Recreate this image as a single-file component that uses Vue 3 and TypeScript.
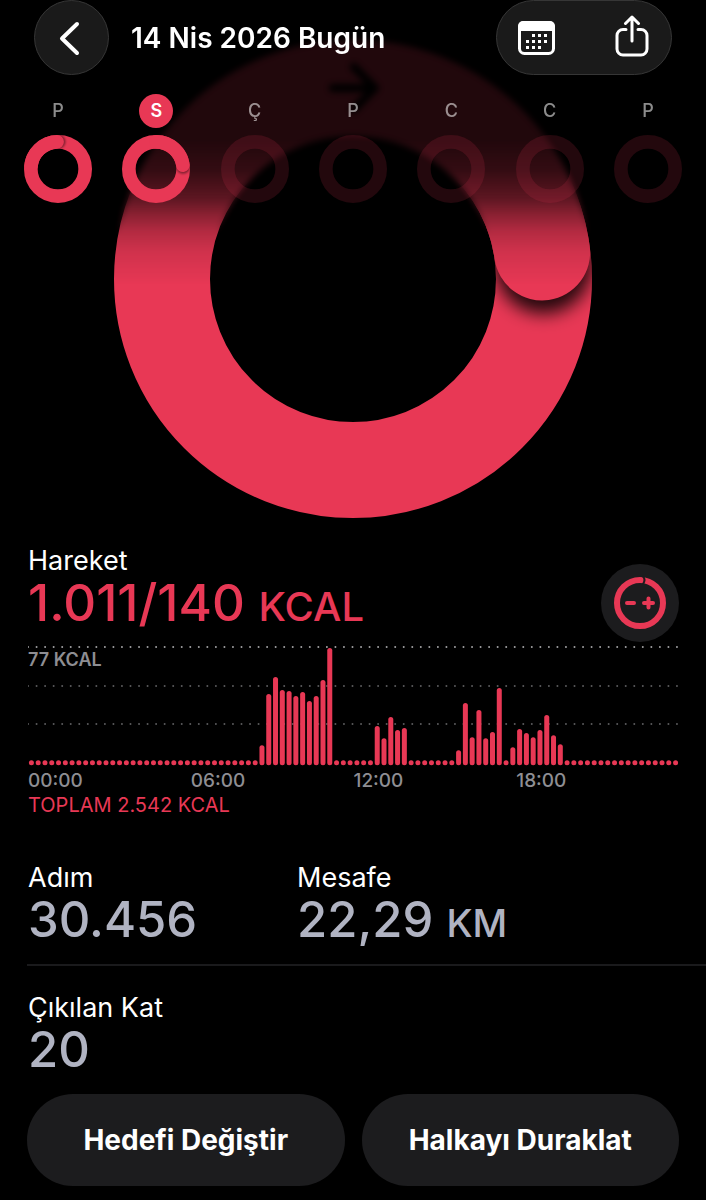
<script setup lang="ts">
interface Day {
  letter: string
  name: string
  angle: number | null
  selected?: boolean
}

const CENTER = 239
const RADIUS = 191

const days: Day[] = [
  { letter: 'P', name: 'Pazartesi', angle: -2 },
  { letter: 'S', name: 'Salı', angle: 82, selected: true },
  { letter: 'Ç', name: 'Çarşamba', angle: null },
  { letter: 'P', name: 'Perşembe', angle: null },
  { letter: 'C', name: 'Cuma', angle: null },
  { letter: 'C', name: 'Cumartesi', angle: null },
  { letter: 'P', name: 'Pazar', angle: null },
]

function pointAt(angle: number) {
  const rad = (angle * Math.PI) / 180
  return {
    x: CENTER + RADIUS * Math.sin(rad),
    y: CENTER - RADIUS * Math.cos(rad),
  }
}

/* Last quarter lap leading up to the rounded tip. */
function tail(angle: number) {
  const from = pointAt(angle - 82)
  const to = pointAt(angle)
  return `M${from.x} ${from.y}A${RADIUS} ${RADIUS} 0 0 1 ${to.x} ${to.y}`
}

const CHART_WIDTH = 650
const BASELINE = 119
const SLOTS = 96
const DOT = 5
const activity: Record<number, number[]> = {
  34: [20, 71, 88, 75, 74, 69, 73, 64, 69, 85, 117],
  51: [39, 27, 48, 35, 37],
  63: [15, 62, 28, 55, 27, 33, 77],
  71: [18, 36, 32, 28, 35, 50, 30, 21],
}
const heights: number[] = Array(SLOTS).fill(DOT)
for (const [start, values] of Object.entries(activity)) {
  values.forEach((value, i) => (heights[Number(start) + i] = value))
}
const slot = CHART_WIDTH / SLOTS
const bars = heights.map((height, i) => ({
  x: (i + 0.5) * slot - DOT / 2,
  y: BASELINE - height,
  height,
}))
const gridLines = [1, 40, 78]
const dotGap = 648 / 76
const hours = ['00:00', '06:00', '12:00', '18:00']
</script>

<template>
  <main class="page">
    <section class="hero">
      <svg class="big-ring" viewBox="0 0 478 478" role="img" aria-label="Hareket halkası">
        <defs>
          <clipPath id="ring-clip">
            <path clip-rule="evenodd" d="M239 0a239 239 0 0 1 0 478a239 239 0 0 1 0-478zM239 96a143 143 0 0 0 0 286a143 143 0 0 0 0-286z" />
          </clipPath>
          <filter id="tip-shadow" x="-50%" y="-50%" width="200%" height="200%">
            <feGaussianBlur stdDeviation="9" />
          </filter>
        </defs>
        <circle class="band" cx="239" cy="239" r="191" />
        <g clip-path="url(#ring-clip)">
          <circle class="shadow" :cx="pointAt(86).x" :cy="pointAt(86).y" r="48" filter="url(#tip-shadow)" />
        </g>
        <path class="band tip" :d="tail(82)" />
        <path class="ring-arrow" d="M219 48h39M240 27l21 21l-21 21" />
      </svg>
      <div class="haze"></div>
      <div class="shade"></div>

      <div class="top">
        <header class="bar">
          <button class="glass back" type="button" aria-label="Geri">
            <svg viewBox="0 0 24 36" width="24" height="36">
              <path d="M19 4L4 18.500L19 33" fill="none" stroke="#fff" stroke-width="4" stroke-linecap="round" stroke-linejoin="round" />
            </svg>
          </button>
          <h1 class="title">14 Nis 2026 Bugün</h1>
          <div class="glass actions">
            <button class="icon-button" type="button" aria-label="Takvim">
              <svg viewBox="0 0 38 42" width="38" height="42">
                <rect x="2.500" y="5.500" width="34" height="31" rx="5" fill="none" stroke="#fff" stroke-width="3" />
                <path d="M1 14V9a5 5 0 0 1 5-5h27a5 5 0 0 1 5 5v5z" fill="#fff" />
                <g fill="#fff">
                  <rect x="15" y="17" width="3" height="3" /><rect x="21" y="17" width="3" height="3" /><rect x="27" y="17" width="3" height="3" />
                  <rect x="9" y="23" width="3" height="3" /><rect x="15" y="23" width="3" height="3" /><rect x="21" y="23" width="3" height="3" /><rect x="27" y="23" width="3" height="3" />
                  <rect x="9" y="29" width="3" height="3" /><rect x="15" y="29" width="3" height="3" /><rect x="21" y="29" width="3" height="3" />
                </g>
              </svg>
            </button>
            <button class="icon-button" type="button" aria-label="Paylaş">
              <svg viewBox="0 0 38 46" width="38" height="46">
                <g fill="none" stroke="#fff" stroke-width="3" stroke-linecap="round" stroke-linejoin="round">
                  <path d="M13 14.500H10a6 6 0 0 0-6 6V34a6 6 0 0 0 6 6h18a6 6 0 0 0 6-6V20.500a6 6 0 0 0-6-6h-3" />
                  <path d="M19 26V2M12.500 8.500L19 2l6.500 6.500" />
                </g>
              </svg>
            </button>
          </div>
        </header>

        <nav class="week" aria-label="Hafta">
          <button v-for="day in days" :key="day.name" class="day" type="button" :aria-label="day.name">
            <span class="letter" :class="{ selected: day.selected }">{{ day.letter }}</span>
            <svg class="day-ring" viewBox="0 0 478 478">
              <circle class="band" :class="{ empty: day.angle === null }" cx="239" cy="239" r="191" />
              <template v-if="day.angle !== null">
                <g clip-path="url(#ring-clip)">
                  <circle class="shadow soft" :cx="pointAt(day.angle + 3).x" :cy="pointAt(day.angle + 3).y" r="50" filter="url(#tip-shadow)" />
                </g>
                <path class="band tip" :d="tail(day.angle)" />
              </template>
            </svg>
          </button>
        </nav>
      </div>
    </section>

    <section class="move">
      <div class="move-head">
        <div>
          <h2 class="label">Hareket</h2>
          <p class="value red">1.011/140 <span class="unit">KCAL</span></p>
        </div>
        <button class="adjust" type="button" aria-label="Hedefi ayarla">
          <svg viewBox="0 0 56 56" width="56" height="56">
            <g fill="none" stroke="#e83855" stroke-linecap="round">
              <circle cx="28" cy="28" r="23" stroke-width="6" />
              <path d="M31 1.500q3 3 0 7.500" stroke="#1c1c1e" stroke-width="2" />
              <path d="M15 28h7M32 28h9M36.500 23.500v9" stroke-width="4" />
            </g>
          </svg>
        </button>
      </div>

      <div class="chart">
        <svg class="plot" viewBox="0 0 650 120" role="img" aria-label="Saatlere göre hareket">
          <line
            v-for="(y, i) in gridLines"
            :key="y"
            class="grid"
            :class="{ strong: i === 0 }"
            x1="0"
            :y1="y"
            x2="650"
            :y2="y"
            :stroke-dasharray="`0 ${dotGap}`"
          />
          <rect v-for="(bar, i) in bars" :key="i" :x="bar.x" :y="bar.y" :width="DOT" :height="bar.height" rx="2.500" fill="#e83855" />
        </svg>
        <span class="peak">77 KCAL</span>
      </div>
      <div class="hours">
        <span v-for="hour in hours" :key="hour">{{ hour }}</span>
      </div>
      <p class="total">TOPLAM 2.542 KCAL</p>
    </section>

    <section class="stats">
      <div>
        <h2 class="label">Adım</h2>
        <p class="value">30.456</p>
      </div>
      <div>
        <h2 class="label">Mesafe</h2>
        <p class="value">22,29 <span class="unit">KM</span></p>
      </div>
    </section>
    <hr class="divider" />
    <section class="stats floors">
      <div>
        <h2 class="label">Çıkılan Kat</h2>
        <p class="value">20</p>
      </div>
    </section>

    <footer class="buttons">
      <button class="pill" type="button">Hedefi Değiştir</button>
      <button class="pill" type="button">Halkayı Duraklat</button>
    </footer>
  </main>
</template>

<style>
body {
  background: #000;
}
</style>

<style scoped>
.page {
  min-height: 100vh;
  box-sizing: border-box;
  overflow: hidden;
  padding-bottom: 13px;
  background: #000;
  color: #fff;
  font-family: Inter, 'Liberation Sans', sans-serif;
}

h1,
h2,
p {
  margin: 0;
  font-weight: 400;
}

button {
  border: 0;
  padding: 0;
  background: none;
  color: inherit;
  font: inherit;
  cursor: pointer;
}

svg {
  display: block;
}

.hero {
  position: relative;
  display: flex;
  justify-content: center;
  padding: 40px 0 27px;
}

.big-ring {
  width: 478px;
  height: 478px;
}

.band {
  fill: none;
  stroke: #e83855;
  stroke-width: 96;
}

.band.empty {
  stroke: rgba(232, 56, 85, 0.15);
}

.tip {
  stroke-linecap: round;
}

.shadow {
  fill: rgba(0, 0, 0, 0.85);
}

.shadow.soft {
  fill: rgba(0, 0, 0, 0.45);
}

.ring-arrow {
  fill: none;
  stroke: #000;
  stroke-width: 8;
  stroke-linecap: round;
  stroke-linejoin: round;
}

.haze,
.shade {
  position: absolute;
  inset: 0 0 auto;
  height: 290px;
}

.haze {
  backdrop-filter: blur(3px);
  mask-image: linear-gradient(#000 180px, transparent 235px);
}

.shade {
  background: linear-gradient(
    rgba(0, 0, 0, 0.86) 140px,
    rgba(0, 0, 0, 0.78) 170px,
    rgba(0, 0, 0, 0.6) 198px,
    rgba(0, 0, 0, 0.4) 215px,
    rgba(0, 0, 0, 0.23) 231px,
    rgba(0, 0, 0, 0.1) 252px,
    transparent 285px
  );
}

.top {
  position: absolute;
  inset: 0 0 auto;
}

.bar {
  display: flex;
  align-items: center;
  height: 75px;
  padding: 0 34px;
}

.glass {
  box-sizing: border-box;
  height: 75px;
  border: 1px solid #363636;
  border-radius: 38px;
  background: #1a1a1a;
}

.back {
  display: flex;
  align-items: center;
  justify-content: center;
  width: 75px;
  padding-right: 4px;
}

.title {
  flex: 1;
  margin-left: 22px;
  font-size: 28px;
  font-weight: 600;
  line-height: 36px;
  white-space: nowrap;
}

.actions {
  display: flex;
  align-items: center;
  justify-content: space-between;
  width: 176px;
  padding: 0 20px;
}

.icon-button {
  display: block;
}

.week {
  display: flex;
  justify-content: space-between;
  padding: 19px 24px 0;
}

.day {
  display: flex;
  flex-direction: column;
  align-items: center;
  gap: 7px;
}

.letter {
  width: 34px;
  border-radius: 17px;
  color: rgba(255, 255, 255, 0.55);
  font-size: 18px;
  font-weight: 500;
  line-height: 34px;
  text-align: center;
}

.letter.selected {
  background: #e83855;
  color: #fff;
  font-weight: 600;
}

.day-ring {
  width: 68px;
  height: 68px;
}

.move {
  padding: 0 27px 0 28px;
}

.move-head {
  display: flex;
  justify-content: space-between;
}

.label {
  font-size: 27px;
  line-height: 32px;
}

.value {
  color: #b0b3c2;
  font-size: 49px;
  font-weight: 500;
  line-height: 52px;
  white-space: nowrap;
}

.unit {
  font-size: 38px;
  line-height: 1;
}

.value.red {
  color: #e83855;
  font-size: 51px;
}

.red .unit {
  font-size: 40px;
}

.adjust {
  display: flex;
  align-items: center;
  justify-content: center;
  width: 78px;
  height: 78px;
  margin-top: 19px;
  border-radius: 50%;
  background: #1c1c1e;
}

.chart {
  position: relative;
  margin-top: 4px;
}

.plot {
  width: 100%;
}

.grid {
  stroke: #5a5a5c;
  stroke-width: 2;
  stroke-linecap: round;
}

.grid.strong {
  stroke: #a0a0a2;
}

.peak {
  position: absolute;
  top: 2px;
  left: 0;
  color: #8e8e93;
  font-size: 18px;
  font-weight: 600;
  line-height: 24px;
}

.hours {
  display: grid;
  grid-template-columns: repeat(4, 1fr);
  margin-top: 3px;
  color: #8e8e93;
  font-size: 19px;
  font-weight: 500;
  line-height: 24px;
}

.total {
  color: #e83855;
  font-size: 20px;
  line-height: 24px;
}

.stats {
  display: grid;
  grid-template-columns: 269px 1fr;
  padding: 45px 28px 18px;
}

.divider {
  height: 2px;
  margin: 0 0 0 27px;
  border: 0;
  background: #1a1a1c;
}

.floors {
  padding-top: 26px;
}

.buttons {
  display: grid;
  grid-template-columns: 1fr 1fr;
  gap: 17px;
  padding: 0 27px;
}

.pill {
  height: 92px;
  border-radius: 46px;
  background: #1c1c1e;
  font-size: 28px;
  font-weight: 700;
}
</style>
